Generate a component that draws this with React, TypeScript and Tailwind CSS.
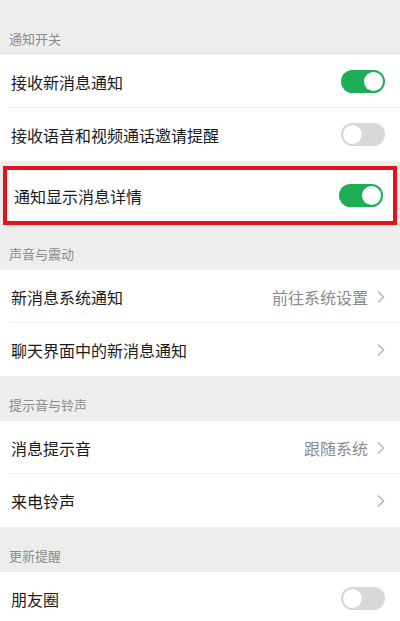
import React from "react";

type Row = {
  label: string;
  value?: string;
  toggle?: boolean;
  arrow?: boolean;
};

const Toggle = ({ on }: { on: boolean }) => (
  <div
    className={
      on
        ? "flex h-[23px] w-[44px] items-center justify-end rounded-full bg-[#1dae56] p-[2px]"
        : "flex h-[23px] w-[44px] items-center justify-start rounded-full bg-[#d8d8d8] p-[1px]"
    }
  >
    <div
      className={
        on
          ? "h-[19px] w-[19px] rounded-full bg-white"
          : "h-[21px] w-[21px] rounded-full border border-[#cfcfcf] bg-white"
      }
    />
  </div>
);

const Chevron = () => (
  <svg width="8" height="14" viewBox="0 0 8 14" fill="none" className="ml-[9px]">
    <path d="M1 1.5 L6.5 7 L1 12.5" stroke="#b2b2b2" strokeWidth="1.4" />
  </svg>
);

const RowItem = ({ row, last }: { row: Row; last: boolean }) => (
  <div className="relative flex h-[53px] items-center bg-white pl-[11px] pr-[15px]">
    <span className="flex-1 text-[16px] text-[#1b1b1b]">{row.label}</span>
    {row.value && <span className="text-[16px] text-[#8a8a8a]">{row.value}</span>}
    {row.arrow && <Chevron />}
    {row.toggle !== undefined && <Toggle on={row.toggle} />}
    {!last && <div className="absolute bottom-0 left-[10px] right-0 h-px bg-[#efefef]" />}
  </div>
);

const Header = ({ title, tall }: { title: string; tall?: boolean }) => (
  <div
    className={
      (tall ? "h-[55px]" : "h-[45px]") +
      " flex items-end bg-[#ededed] pb-[7px] pl-[9px] text-[13px] text-[#8c8c8c]"
    }
  >
    {title}
  </div>
);

export default function App() {
  return (
    <div
      className="h-[621px] w-[400px] overflow-hidden bg-[#ededed]"
      style={{ fontFamily: '"Noto Sans CJK SC", "Noto Sans", sans-serif' }}
    >
      <Header title="通知开关" tall />
      <RowItem row={{ label: "接收新消息通知", toggle: true }} last={false} />
      <RowItem row={{ label: "接收语音和视频通话邀请提醒", toggle: false }} last />
      <div className="bg-[#ededed] px-[3px] pt-[5px]">
        <div className="flex h-[59px] items-center border-4 border-[#e3131c] bg-white pl-[7px] pr-[10px]">
          <span className="flex-1 text-[16px] text-[#1b1b1b]">通知显示消息详情</span>
          <Toggle on />
        </div>
      </div>
      <Header title="声音与震动" />
      <RowItem row={{ label: "新消息系统通知", value: "前往系统设置", arrow: true }} last={false} />
      <RowItem row={{ label: "聊天界面中的新消息通知", arrow: true }} last />
      <Header title="提示音与铃声" />
      <RowItem row={{ label: "消息提示音", value: "跟随系统", arrow: true }} last={false} />
      <RowItem row={{ label: "来电铃声", arrow: true }} last />
      <Header title="更新提醒" />
      <RowItem row={{ label: "朋友圈", toggle: false }} last />
    </div>
  );
}
